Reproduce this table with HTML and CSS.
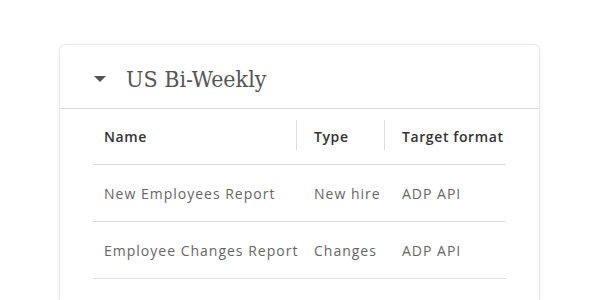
FILE: index.html
```html
<html>

<head>
    <link rel="stylesheet" href="styles.css">
</head>

<body>
    <div class="card">
        <div class="card-head">
            <svg class="caret" width="12" height="6" viewBox="0 0 12 6">
                <polygon points="0,0 12,0 6,6" fill="#555"></polygon>
            </svg>
            <h2>US Bi-Weekly</h2>
        </div>
        <div class="card-body">
            <table class="reports">
                <tr>
                    <th class="col-name">Name</th>
                    <th class="col-type">Type</th>
                    <th class="col-format">Target format</th>
                </tr>
                <tr>
                    <td>New Employees Report</td>
                    <td>New hire</td>
                    <td>ADP API</td>
                </tr>
                <tr>
                    <td>Employee Changes Report</td>
                    <td>Changes</td>
                    <td>ADP API</td>
                </tr>
            </table>
        </div>
    </div>
</body>

</html>
```

FILE: styles.css
```css
body {
    margin: 0;
    background: #fff;
    font-family: 'Open Sans', sans-serif;
    height: 300px;
    overflow: hidden;
}
.card {
    margin: 45px 0 0 60px;
    width: 479px;
    height: 260px;
    background: #fff;
    border-radius: 5px;
    box-shadow: 0 0 0 1px #e8e8e8, 0 1px 8px rgba(0, 0, 0, 0.07);
}
.card-head {
    display: flex;
    align-items: center;
    height: 63px;
    padding-left: 34px;
    border-bottom: 1px solid #ddd;
}
.caret {
    margin-right: 20px;
    margin-top: 4px;
}
h2 {
    margin: 5px 0 0 0;
    font-family: 'DejaVu Serif Condensed', 'DejaVu Serif', serif;
    font-weight: normal;
    font-size: 23px;
    color: #555;
}
.card-body {
    padding: 0 33px;
}
.reports {
    width: 413px;
    border-collapse: collapse;
}
th, td {
    text-align: left;
    padding: 0 0 0 11px;
    white-space: nowrap;
}
th {
    position: relative;
    height: 55px;
    font-size: 14px;
    font-weight: 600;
    letter-spacing: 0.6px;
    color: #333;
    border-bottom: 1px solid #ddd;
}
th.col-name::after,
th.col-type::after {
    content: "";
    position: absolute;
    right: 6px;
    top: 11px;
    bottom: 14px;
    border-right: 1px solid #ddd;
}
.col-name { width: 199px; }
.col-type { width: 77px; }
td {
    height: 57px;
    padding-top: 2px;
    font-size: 14px;
    letter-spacing: 1px;
    color: #666;
    border-bottom: 1px solid #ddd;
}
```
